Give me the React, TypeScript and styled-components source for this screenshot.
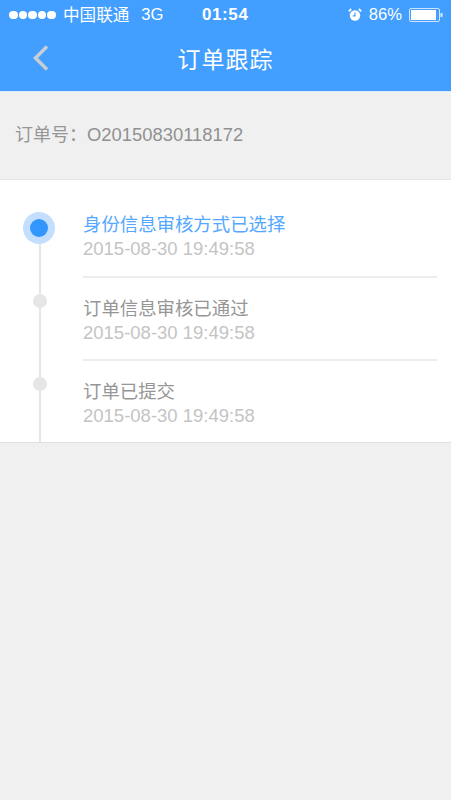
import React from "react";
import styled, { createGlobalStyle } from "styled-components";

const Global = createGlobalStyle`
  html, body { margin: 0; padding: 0; background: #f0f0f0; }
  body { font-family: "Liberation Sans", "Noto Sans CJK SC", sans-serif; }
`;
const Page = styled.div`
  width: 451px; height: 800px; background: #f0f0f0; overflow: hidden;
  display: flex; flex-direction: column;
`;
const Top = styled.header`
  height: 91px; background: #429eff; border-bottom: 1px solid #d9ebff; color: #fff;
  display: flex; flex-direction: column;
`;
const Status = styled.div`
  height: 30px; display: flex; align-items: center; padding: 0 8px 0 9px; font-size: 16.6px;
  position: relative;
`;
const Dots = styled.div`display: flex; gap: 1px; margin-right: 7px;`;
const Dot = styled.span`width: 8.6px; height: 8.6px; border-radius: 50%; background: #fff; display: block;`;
const Carrier = styled.span`position: relative; top: -1px;`;
const Net = styled.span`margin-left: 12px;`;
const Clock = styled.span`position: absolute; left: 202px; top: 5px; font-weight: 700; line-height: 20px; font-size: 17px; letter-spacing: 0.6px;`;
const Right = styled.div`margin-left: auto; display: flex; align-items: center; gap: 7px;`;
const Nav = styled.div`
  flex: 1; display: flex; align-items: center; justify-content: center; position: relative; padding-bottom: 2px;
`;
const Title = styled.h1`margin: 0; font-size: 23px; font-weight: 400; letter-spacing: 1px; line-height: 30px;`;
const Back = styled.svg`position: absolute; left: 32px; top: 14px;`;
const OrderRow = styled.div`
  height: 88px; display: flex; align-items: center; padding-left: 15px; font-size: 18.4px; color: #969696;
  border-bottom: 1px solid #e6e6e6; box-sizing: border-box;
`;
const OrderLabel = styled.span`width: 72px; flex: none; font-size: 18px; line-height: 24px; position: relative; top: -1px;`;
const OrderNo = styled.span`color: #909090; line-height: 24px; position: relative; top: -1px;`;
const Card = styled.section`
  background: #fff; border-bottom: 1px solid #e0e0e0; display: flex; flex-direction: column;
`;
const Row = styled.div<{ $h: number }>`height: ${p => p.$h}px; display: flex;`;
const Rail = styled.div`
  width: 83px; flex: none; box-sizing: border-box; padding-right: 3px; display: flex; flex-direction: column; align-items: center;
`;
const Gap = styled.div`height: 32px; flex: none;`;
const Line = styled.div<{ $h?: number }>`
  width: 2px; background: #e6e6e6; ${p => (p.$h ? `height: ${p.$h}px; flex: none;` : "flex: 1;")}
`;
const Halo = styled.div`
  width: 32px; height: 32px; margin-left: -2px; border-radius: 50%; background: #c3dffd; flex: none;
  display: flex; align-items: center; justify-content: center;
`;
const Core = styled.div`width: 18px; height: 18px; border-radius: 50%; background: #3296ff;`;
const Small = styled.div`width: 14px; height: 14px; border-radius: 50%; background: #e6e6e6; flex: none;`;
const Body = styled.div<{ $top: number; $last?: boolean }>`
  flex: 1; margin-right: 14px; padding-top: ${p => p.$top}px; box-sizing: border-box;
  border-bottom: ${p => (p.$last ? "none" : "2px solid #ececec")};
`;
const Name = styled.div<{ $active?: boolean }>`
  font-size: 18.4px; line-height: 24px; color: ${p => (p.$active ? "#55a8ff" : "#969696")};
`;
const Time = styled.div`font-size: 18.5px; line-height: 24px; color: #c4c4c4;`;

const TIME = "2015-08-30 19:49:58";

export default function App() {
  return (
    <Page>
      <Global />
      <Top>
        <Status>
          <Dots>{[0, 1, 2, 3, 4].map(i => <Dot key={i} />)}</Dots>
          <Carrier>中国联通</Carrier>
          <Net>3G</Net>
          <Clock>01:54</Clock>
          <Right>
            <svg width="14" height="14" viewBox="0 0 14 14">
              <circle cx="7" cy="7.5" r="5.2" fill="#fff" />
              <path d="M7 4.5V7.8H4.8" stroke="#429eff" strokeWidth="1.2" fill="none" />
              <path d="M0.8 3.4 3.2 1M13.2 3.4 10.8 1" stroke="#fff" strokeWidth="1.8" />
            </svg>
            <span>86%</span>
            <svg width="34" height="14" viewBox="0 0 34 14">
              <rect x="0.5" y="0.5" width="30" height="13" rx="1.5" fill="none" stroke="#cfe5ff" />
              <rect x="2" y="2" width="25" height="10" fill="#fff" />
              <rect x="31.5" y="5" width="2" height="4" fill="#dcecff" />
            </svg>
          </Right>
        </Status>
        <Nav>
          <Back width="18" height="28" viewBox="0 0 18 28">
            <path d="M15 2.5 3.5 14 15 25.5" fill="none" stroke="#c9ced3" strokeWidth="3.4" />
          </Back>
          <Title>订单跟踪</Title>
        </Nav>
      </Top>
      <OrderRow>
        <OrderLabel>订单号：</OrderLabel>
        <OrderNo>O20150830118172</OrderNo>
      </OrderRow>
      <Card>
        <Row $h={98}>
          <Rail>
            <Gap />
            <Halo><Core /></Halo>
            <Line />
          </Rail>
          <Body $top={33}>
            <Name $active>身份信息审核方式已选择</Name>
            <Time>{TIME}</Time>
          </Body>
        </Row>
        <Row $h={83}>
          <Rail>
            <Line $h={16} />
            <Small />
            <Line />
          </Rail>
          <Body $top={19}>
            <Name>订单信息审核已通过</Name>
            <Time>{TIME}</Time>
          </Body>
        </Row>
        <Row $h={81}>
          <Rail>
            <Line $h={16} />
            <Small />
            <Line />
          </Rail>
          <Body $top={19} $last>
            <Name>订单已提交</Name>
            <Time>{TIME}</Time>
          </Body>
        </Row>
      </Card>
    </Page>
  );
}
